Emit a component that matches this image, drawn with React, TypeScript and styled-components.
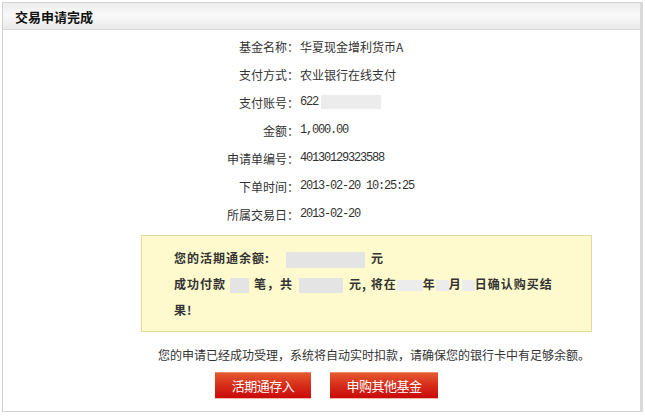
import React from "react";
import styled, { createGlobalStyle } from "styled-components";

const Global = createGlobalStyle`
  html, body { margin: 0; padding: 0; background: #fff; }
  body { font-family: "Noto Sans CJK SC", "Liberation Sans", sans-serif; font-size: 12px; color: #333; }
`;

const Panel = styled.div`
  box-sizing: border-box;
  margin: 2px 0 0 2px;
  width: 641px;
  height: 410px;
  border: 1px solid #d2d2d2;
  border-right: 3px solid #dadada;
  background: #fff;
`;

const Header = styled.div`
  height: 26px;
  border-bottom: 1px solid #d9d9d9;
  background: linear-gradient(to bottom, #ececec 0%, #f9f9f9 45%, #f3f3f3 70%, #e9e9e9 100%);
  display: flex;
  align-items: center;
  padding-left: 12px;
  font-size: 13px;
  font-weight: bold;
  color: #111;
`;

const Body = styled.div`
  padding-top: 2px;
`;

const Row = styled.div`
  display: flex;
  height: 28px;
  align-items: center;
`;

const Label = styled.div`
  width: 296px;
  text-align: right;
  color: #333;
`;

const Value = styled.div`
  margin-left: 1px;
  display: flex;
  align-items: center;
  color: #333;
`;

const Num = styled.span`
  font-family: "Liberation Mono", monospace;
  font-size: 12px;
  letter-spacing: -1.2px;
`;

const Masked = styled.span<{ $w: number; $h?: number; $ml?: number; $mr?: number; $light?: boolean }>`
  display: inline-block;
  width: ${(p) => p.$w}px;
  height: ${(p) => p.$h ?? 15}px;
  margin-left: ${(p) => p.$ml ?? 0}px;
  margin-right: ${(p) => p.$mr ?? 0}px;
  background: ${(p) => (p.$light ? "#ececec" : "#e4e4e4")};
  vertical-align: middle;
`;

const InfoBox = styled.div`
  box-sizing: border-box;
  margin: 7px 0 0 138px;
  width: 451px;
  border: 1px solid #e3d99a;
  background: #fefacd;
  padding: 9px 28px 8px 32px;
  font-weight: bold;
  color: #333;
  line-height: 26px;
  letter-spacing: 1px;
`;

const InfoLine = styled.div`
  white-space: nowrap;
`;

const Notice = styled.div`
  margin: 13px 0 0 155px;
  line-height: 20px;
  color: #333;
`;

const Buttons = styled.div`
  display: flex;
  gap: 19px;
  margin: 7px 0 0 212px;
`;

const RedButton = styled.button<{ $w: number }>`
  width: ${(p) => p.$w}px;
  height: 26px;
  border: 0;
  border-top: 1px solid #f08a68;
  padding: 0;
  color: #fff;
  font-family: "Noto Sans CJK SC", sans-serif;
  font-size: 13px;
  letter-spacing: -0.5px;
  background: linear-gradient(to bottom, #e55a30 0%, #d8301c 45%, #c90a0a 100%);
  box-shadow: 0 1px 0 #f2b6a8;
  cursor: pointer;
`;

const rows: [string, React.ReactNode][] = [
  ["基金名称：", <>华夏现金增利货币A</>],
  ["支付方式：", <>农业银行在线支付</>],
  ["支付账号：", <><Num>622</Num><Masked $w={60} $h={14} $ml={3} $light /></>],
  ["金额：", <Num>1,000.00</Num>],
  ["申请单编号：", <Num>40130129323588</Num>],
  ["下单时间：", <Num>2013-02-20 10:25:25</Num>],
  ["所属交易日：", <Num>2013-02-20</Num>],
];

export default function App() {
  return (
    <>
      <Global />
      <Panel>
        <Header>交易申请完成</Header>
        <Body>
          {rows.map(([l, v]) => (
            <Row key={l}>
              <Label>{l}</Label>
              <Value>{v}</Value>
            </Row>
          ))}
          <InfoBox>
            <InfoLine>
              您的活期通余额:
              <Masked $w={79} $h={16} $ml={16} $mr={6} />元
            </InfoLine>
            <InfoLine>
              成功付款<Masked $w={19} $ml={4} $mr={5} />笔，共
              <Masked $w={44} $ml={6} $mr={6} />元, 将在<Masked $w={26} $h={11} $light />年
              <Masked $w={13} $h={11} $light />月<Masked $w={13} $h={11} $light />日确认购买结
            </InfoLine>
            <InfoLine>果!</InfoLine>
          </InfoBox>
          <Notice>您的申请已经成功受理，系统将自动实时扣款，请确保您的银行卡中有足够余额。</Notice>
          <Buttons>
            <RedButton $w={96}>活期通存入</RedButton>
            <RedButton $w={108}>申购其他基金</RedButton>
          </Buttons>
        </Body>
      </Panel>
    </>
  );
}
